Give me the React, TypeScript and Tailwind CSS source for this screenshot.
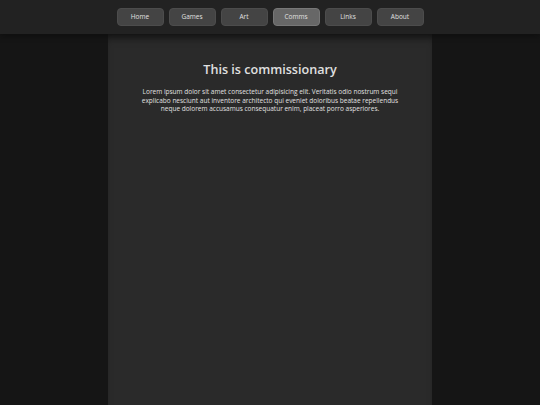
import React from "react";

const items = ["Home", "Games", "Art", "Comms", "Links", "About"];

export default function App() {
  return (
    <div className="min-h-[405px] h-[405px] bg-[#151515] flex flex-col overflow-hidden" style={{ fontFamily: "'Open Sans', 'Noto Sans', sans-serif" }}>
      <header className="h-[34px] bg-[#222222] flex items-center justify-center gap-[5px] shrink-0 relative z-10 shadow-[0_2px_6px_rgba(0,0,0,0.35)]">
        {items.map((it) => (
          <div
            key={it}
            className={`w-[47px] h-[18px] rounded-[4px] flex items-center justify-center text-[6.5px] font-normal text-[#e0e0e0] border ${it === "Comms" ? "bg-[#676767] border-[#777777]" : "bg-[#444444] border-[#4c4c4c]"}`}
          >
            {it}
          </div>
        ))}
      </header>
      <main className="flex-1 flex justify-center">
        <div className="w-[324px] bg-[#2a2a2a] shadow-[inset_0_8px_8px_-4px_rgba(0,0,0,0.4)] pt-[27px] flex flex-col items-center">
          <h1 className="text-[12.6px] font-semibold text-[#e0e0e0] leading-[18px]">This is commissionary</h1>
          <p className="mt-[9px] w-[300px] text-center text-[6.5px] leading-[8.6px] text-[#e0e0e0]">
            Lorem ipsum dolor sit amet consectetur adipisicing elit. Veritatis odio nostrum sequi
            <br />
            explicabo nesciunt aut inventore architecto qui eveniet doloribus beatae repellendus
            <br />
            neque dolorem accusamus consequatur enim, placeat porro asperiores.
          </p>
        </div>
      </main>
    </div>
  );
}
